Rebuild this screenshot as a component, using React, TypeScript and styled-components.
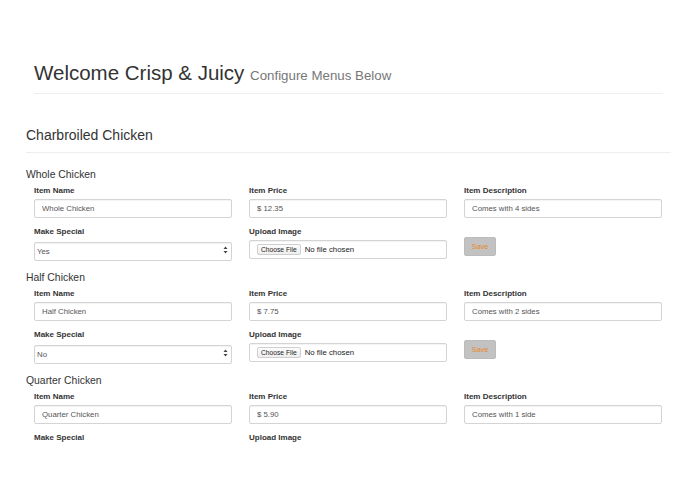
import React from "react";
import styled, { createGlobalStyle } from "styled-components";

const GlobalStyle = createGlobalStyle`
  html, body {
    margin: 0;
    padding: 0;
    background: #ffffff;
  }
  body {
    font-family: "Liberation Sans", Arial, Helvetica, sans-serif;
    color: #333333;
  }
  * { box-sizing: border-box; }
`;

const Page = styled.div`
  width: 645px;
  margin-left: 26px;
  padding-bottom: 40px;
`;

const PageHeader = styled.header`
  margin: 62px 8px 0;
  padding-bottom: 9px;
  border-bottom: 1px solid #eeeeee;
`;

const Title = styled.h1`
  margin: 0;
  font-size: 20.5px;
  line-height: 22px;
  font-weight: 400;
  color: #333333;
`;

const Subtitle = styled.small`
  font-size: 13.3px;
  line-height: 1;
  color: #777777;
  font-weight: 400;
`;

const CategoryTitle = styled.h2`
  margin: 33px 0 0;
  font-size: 14px;
  line-height: 16px;
  font-weight: 400;
  color: #333333;
  padding-bottom: 9px;
  border-bottom: 1px solid #eeeeee;
`;

const ItemList = styled.div`
  margin-top: 16px;
  display: flex;
  flex-direction: column;
  gap: 13px;
`;

const ItemBlock = styled.section`
  display: flex;
  flex-direction: column;
  gap: 5px;
`;

const ItemTitle = styled.h3`
  margin: 0;
  font-size: 10.4px;
  line-height: 12px;
  font-weight: 400;
  color: #333333;
`;

const FieldGrid = styled.div`
  padding-left: 8px;
  display: grid;
  grid-template-columns: repeat(3, 198px);
  column-gap: 17px;
  row-gap: 9px;
`;

const FormGroup = styled.div<{ $offset?: number }>`
  display: flex;
  flex-direction: column;
  align-items: flex-start;
  gap: 3px;
  padding-top: ${(p) => p.$offset ?? 0}px;
`;

const Label = styled.label`
  font-size: 8px;
  line-height: 10px;
  font-weight: 700;
  color: #333333;
`;

const TextInput = styled.input`
  width: 198px;
  height: 19px;
  margin: 0;
  padding: 0 7px;
  font-family: "Liberation Sans", Arial, sans-serif;
  font-size: 7.8px;
  color: #555555;
  -webkit-text-fill-color: #555555;
  background: #ffffff;
  border: 1px solid #d4d4d4;
  border-radius: 2px;
  box-shadow: inset 0 1px 1px rgba(0, 0, 0, 0.05);
  outline: none;
`;

const SelectWrap = styled.div`
  position: relative;
  width: 198px;
  height: 19px;
`;

const Select = styled.select`
  width: 100%;
  height: 100%;
  margin: 0;
  padding: 0 14px 0 2px;
  appearance: none;
  -webkit-appearance: none;
  font-family: "Liberation Sans", Arial, sans-serif;
  font-size: 7.8px;
  color: #555555;
  background: #ffffff;
  border: 1px solid #d4d4d4;
  border-radius: 2px;
  box-shadow: inset 0 1px 1px rgba(0, 0, 0, 0.05);
  outline: none;
`;

const SelectArrows = styled.svg`
  position: absolute;
  right: 4px;
  top: 6px;
  pointer-events: none;
`;

const FileBox = styled.div`
  width: 198px;
  height: 19px;
  display: flex;
  align-items: center;
  gap: 4px;
  padding-left: 7px;
  border: 1px solid #d4d4d4;
  border-radius: 2px;
  box-shadow: inset 0 1px 1px rgba(0, 0, 0, 0.05);
  background: #ffffff;
`;

const ChooseButton = styled.span`
  display: inline-flex;
  align-items: center;
  height: 11px;
  padding: 0 3px;
  font-size: 6.7px;
  color: #222222;
  background: linear-gradient(#fcfcfc, #eeeeee);
  border: 1px solid #cfcfcf;
  border-radius: 2px;
`;

const FileStatus = styled.span`
  font-size: 7.8px;
  color: #222222;
`;

const SaveButton = styled.button`
  width: 32px;
  height: 19px;
  margin: 0;
  padding: 0;
  font-family: "Liberation Sans", Arial, sans-serif;
  font-size: 7.5px;
  color: #e8892d;
  background: #c2c2c2;
  border: 1px solid #bbbbbb;
  border-radius: 2px;
`;

type Item = {
  name: string;
  price: string;
  description: string;
  special: string;
  cutoff?: boolean;
};

const items: Item[] = [
  { name: "Whole Chicken", price: "$ 12.35", description: "Comes with 4 sides", special: "Yes" },
  { name: "Half Chicken", price: "$ 7.75", description: "Comes with 2 sides", special: "No" },
  { name: "Quarter Chicken", price: "$ 5.90", description: "Comes with 1 side", special: "No", cutoff: true },
];

const Arrows = () => (
  <SelectArrows width="5" height="8" viewBox="0 0 5 8">
    <path d="M2.5 0.5 L4.5 3 L0.5 3 Z" fill="#444" />
    <path d="M2.5 7.5 L4.5 5 L0.5 5 Z" fill="#444" />
  </SelectArrows>
);

const MenuItem = ({ item }: { item: Item }) => (
  <ItemBlock>
    <ItemTitle>{item.name}</ItemTitle>
    <FieldGrid>
      <FormGroup>
        <Label>Item Name</Label>
        <TextInput type="text" defaultValue={item.name} autoComplete="off" spellCheck={false} />
      </FormGroup>
      <FormGroup>
        <Label>Item Price</Label>
        <TextInput type="text" defaultValue={item.price} autoComplete="off" spellCheck={false} />
      </FormGroup>
      <FormGroup>
        <Label>Item Description</Label>
        <TextInput type="text" defaultValue={item.description} autoComplete="off" spellCheck={false} />
      </FormGroup>
      <FormGroup>
        <Label>Make Special</Label>
        {!item.cutoff && (
          <SelectWrap>
            <Select defaultValue={item.special}>
              <option>Yes</option>
              <option>No</option>
            </Select>
            <Arrows />
          </SelectWrap>
        )}
      </FormGroup>
      <FormGroup>
        <Label>Upload Image</Label>
        {!item.cutoff && (
          <FileBox>
            <ChooseButton>Choose File</ChooseButton>
            <FileStatus>No file chosen</FileStatus>
          </FileBox>
        )}
      </FormGroup>
      {!item.cutoff && (
        <FormGroup $offset={10}>
          <SaveButton>Save</SaveButton>
        </FormGroup>
      )}
    </FieldGrid>
  </ItemBlock>
);

export default function App() {
  return (
    <>
      <GlobalStyle />
      <Page>
        <PageHeader>
          <Title>
            Welcome Crisp &amp; Juicy <Subtitle>Configure Menus Below</Subtitle>
          </Title>
        </PageHeader>
        <CategoryTitle>Charbroiled Chicken</CategoryTitle>
        <ItemList>
          {items.map((item) => (
            <MenuItem key={item.name} item={item} />
          ))}
        </ItemList>
      </Page>
    </>
  );
}
